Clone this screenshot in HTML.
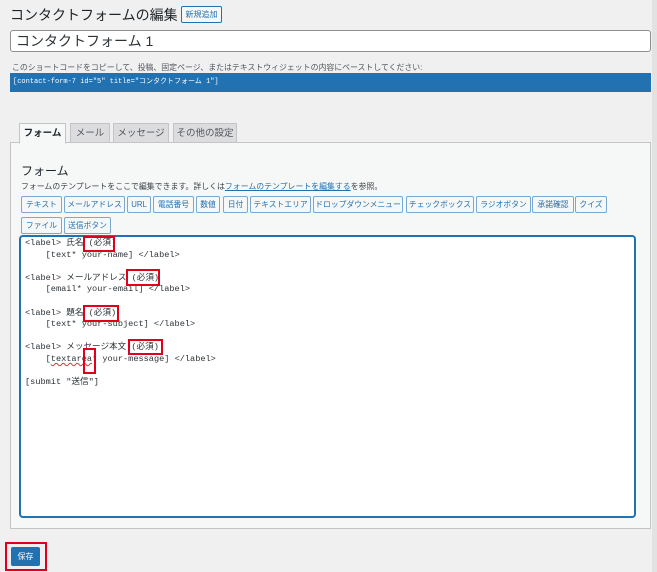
<!DOCTYPE html>
<html><head><meta charset="utf-8"><style>
body{margin:0;width:657px;height:572px;background:#f0f0f1;font-family:"Liberation Sans","Noto Sans CJK JP",sans-serif;color:#1d2327;position:relative;overflow:hidden}
.a{position:absolute;white-space:nowrap}
.btn{position:absolute;height:17px;border:1px solid #7aa8cf;border-radius:2px;background:#f6f7f7;color:#2271b1;font-size:7.8px;line-height:16px;text-align:center;box-sizing:border-box}
.tab{position:absolute;top:123px;height:20px;background:#dcdcde;border:1px solid #c3c4c7;font-size:9.5px;line-height:19px;text-align:center;box-sizing:border-box;color:#50575e}
.code{position:absolute;left:25px;font-family:"Liberation Mono","Noto Sans CJK JP",monospace;font-size:8.6px;color:#2c3338;white-space:pre}
.r{position:absolute;border:2px solid #e0001b;box-sizing:border-box}
</style></head><body>
<div class="a" style="left:10px;top:5px;font-size:14px;color:#1d2327">コンタクトフォームの編集</div>
<div class="a" style="left:181px;top:6px;width:41px;height:17px;border:1px solid #2271b1;border-radius:2px;background:#f6f7f7;color:#2271b1;font-size:8px;line-height:16px;text-align:center;box-sizing:border-box">新規追加</div>
<div class="a" style="left:10px;top:30px;width:641px;height:22px;background:#fff;border:1px solid #8c8f94;border-radius:3px;box-sizing:border-box;font-size:14px;line-height:20px;padding-left:5px;color:#2c3338">コンタクトフォーム 1</div>
<div class="a" style="left:12px;top:62px;font-size:7.9px;color:#50575e">このショートコードをコピーして、投稿、固定ページ、またはテキストウィジェットの内容にペーストしてください:</div>
<div class="a" style="left:10px;top:73px;width:641px;height:19px;background:#2271b1;color:#fff;font-family:'Liberation Mono','Noto Sans CJK JP',monospace;font-size:7px;line-height:19px;padding-left:3px;box-sizing:border-box">[contact-form-7 id="5" title="コンタクトフォーム 1"]</div>
<div class="a" style="left:10px;top:142px;width:641px;height:387px;background:#f6f7f7;border:1px solid #c3c4c7;box-sizing:border-box"></div>
<div class="tab" style="left:19px;width:47px;background:#f6f7f7;border-bottom-color:#f6f7f7;color:#1d2327;font-weight:bold;height:21px">フォーム</div>
<div class="tab" style="left:70px;width:40px">メール</div>
<div class="tab" style="left:113px;width:56px">メッセージ</div>
<div class="tab" style="left:173px;width:64px">その他の設定</div>
<div class="a" style="left:21px;top:162px;font-size:12px">フォーム</div>
<div class="a" style="left:21px;top:181px;font-size:7.9px;color:#3c434a">フォームのテンプレートをここで編集できます。詳しくは<span style="color:#2271b1;text-decoration:underline">フォームのテンプレートを編集する</span>を参照。</div>
<div class="btn" style="left:21px;top:196px;width:41px">テキスト</div>
<div class="btn" style="left:64px;top:196px;width:61px">メールアドレス</div>
<div class="btn" style="left:127px;top:196px;width:24px">URL</div>
<div class="btn" style="left:153px;top:196px;width:41px">電話番号</div>
<div class="btn" style="left:196px;top:196px;width:24px">数値</div>
<div class="btn" style="left:223px;top:196px;width:25px">日付</div>
<div class="btn" style="left:250px;top:196px;width:61px">テキストエリア</div>
<div class="btn" style="left:313px;top:196px;width:90px">ドロップダウンメニュー</div>
<div class="btn" style="left:406px;top:196px;width:68px">チェックボックス</div>
<div class="btn" style="left:476px;top:196px;width:55px">ラジオボタン</div>
<div class="btn" style="left:532px;top:196px;width:42px">承諾確認</div>
<div class="btn" style="left:575px;top:196px;width:32px">クイズ</div>
<div class="btn" style="left:21px;top:217px;width:41px">ファイル</div>
<div class="btn" style="left:64px;top:217px;width:47px">送信ボタン</div>
<div class="a" style="left:20px;top:236px;width:615px;height:281px;background:#fff;border:1px solid #2271b1;border-radius:3px;box-sizing:border-box;box-shadow:0 0 0 1px #2271b1"></div>
<div class="code" style="top:238px;line-height:11.6px">&lt;label&gt; 氏名 (必須)
    [text* your-name] &lt;/label&gt;

&lt;label&gt; メールアドレス (必須)
    [email* your-email] &lt;/label&gt;

&lt;label&gt; 題名 (必須)
    [text* your-subject] &lt;/label&gt;

&lt;label&gt; メッセージ本文 (必須)
    [<span style="text-decoration:underline wavy #d63638">textarea</span>* your-message] &lt;/label&gt;

[submit "送信"]</div>
<div class="r" style="left:83px;top:236px;width:32px;height:16px"></div>
<div class="r" style="left:126px;top:269px;width:34px;height:17px"></div>
<div class="r" style="left:83px;top:305px;width:36px;height:17px"></div>
<div class="r" style="left:128px;top:339px;width:35px;height:16px"></div>
<div class="r" style="left:83px;top:348px;width:13px;height:26px"></div>
<div class="a" style="left:652px;top:0;width:5px;height:572px;background:#e2e2e2"></div>
<div class="r" style="left:5px;top:542px;width:42px;height:29px"></div>
<div class="a" style="left:11px;top:547px;width:29px;height:19px;background:#2271b1;border-radius:2px;color:#fff;font-size:8px;line-height:19px;text-align:center">保存</div>
</body></html>
